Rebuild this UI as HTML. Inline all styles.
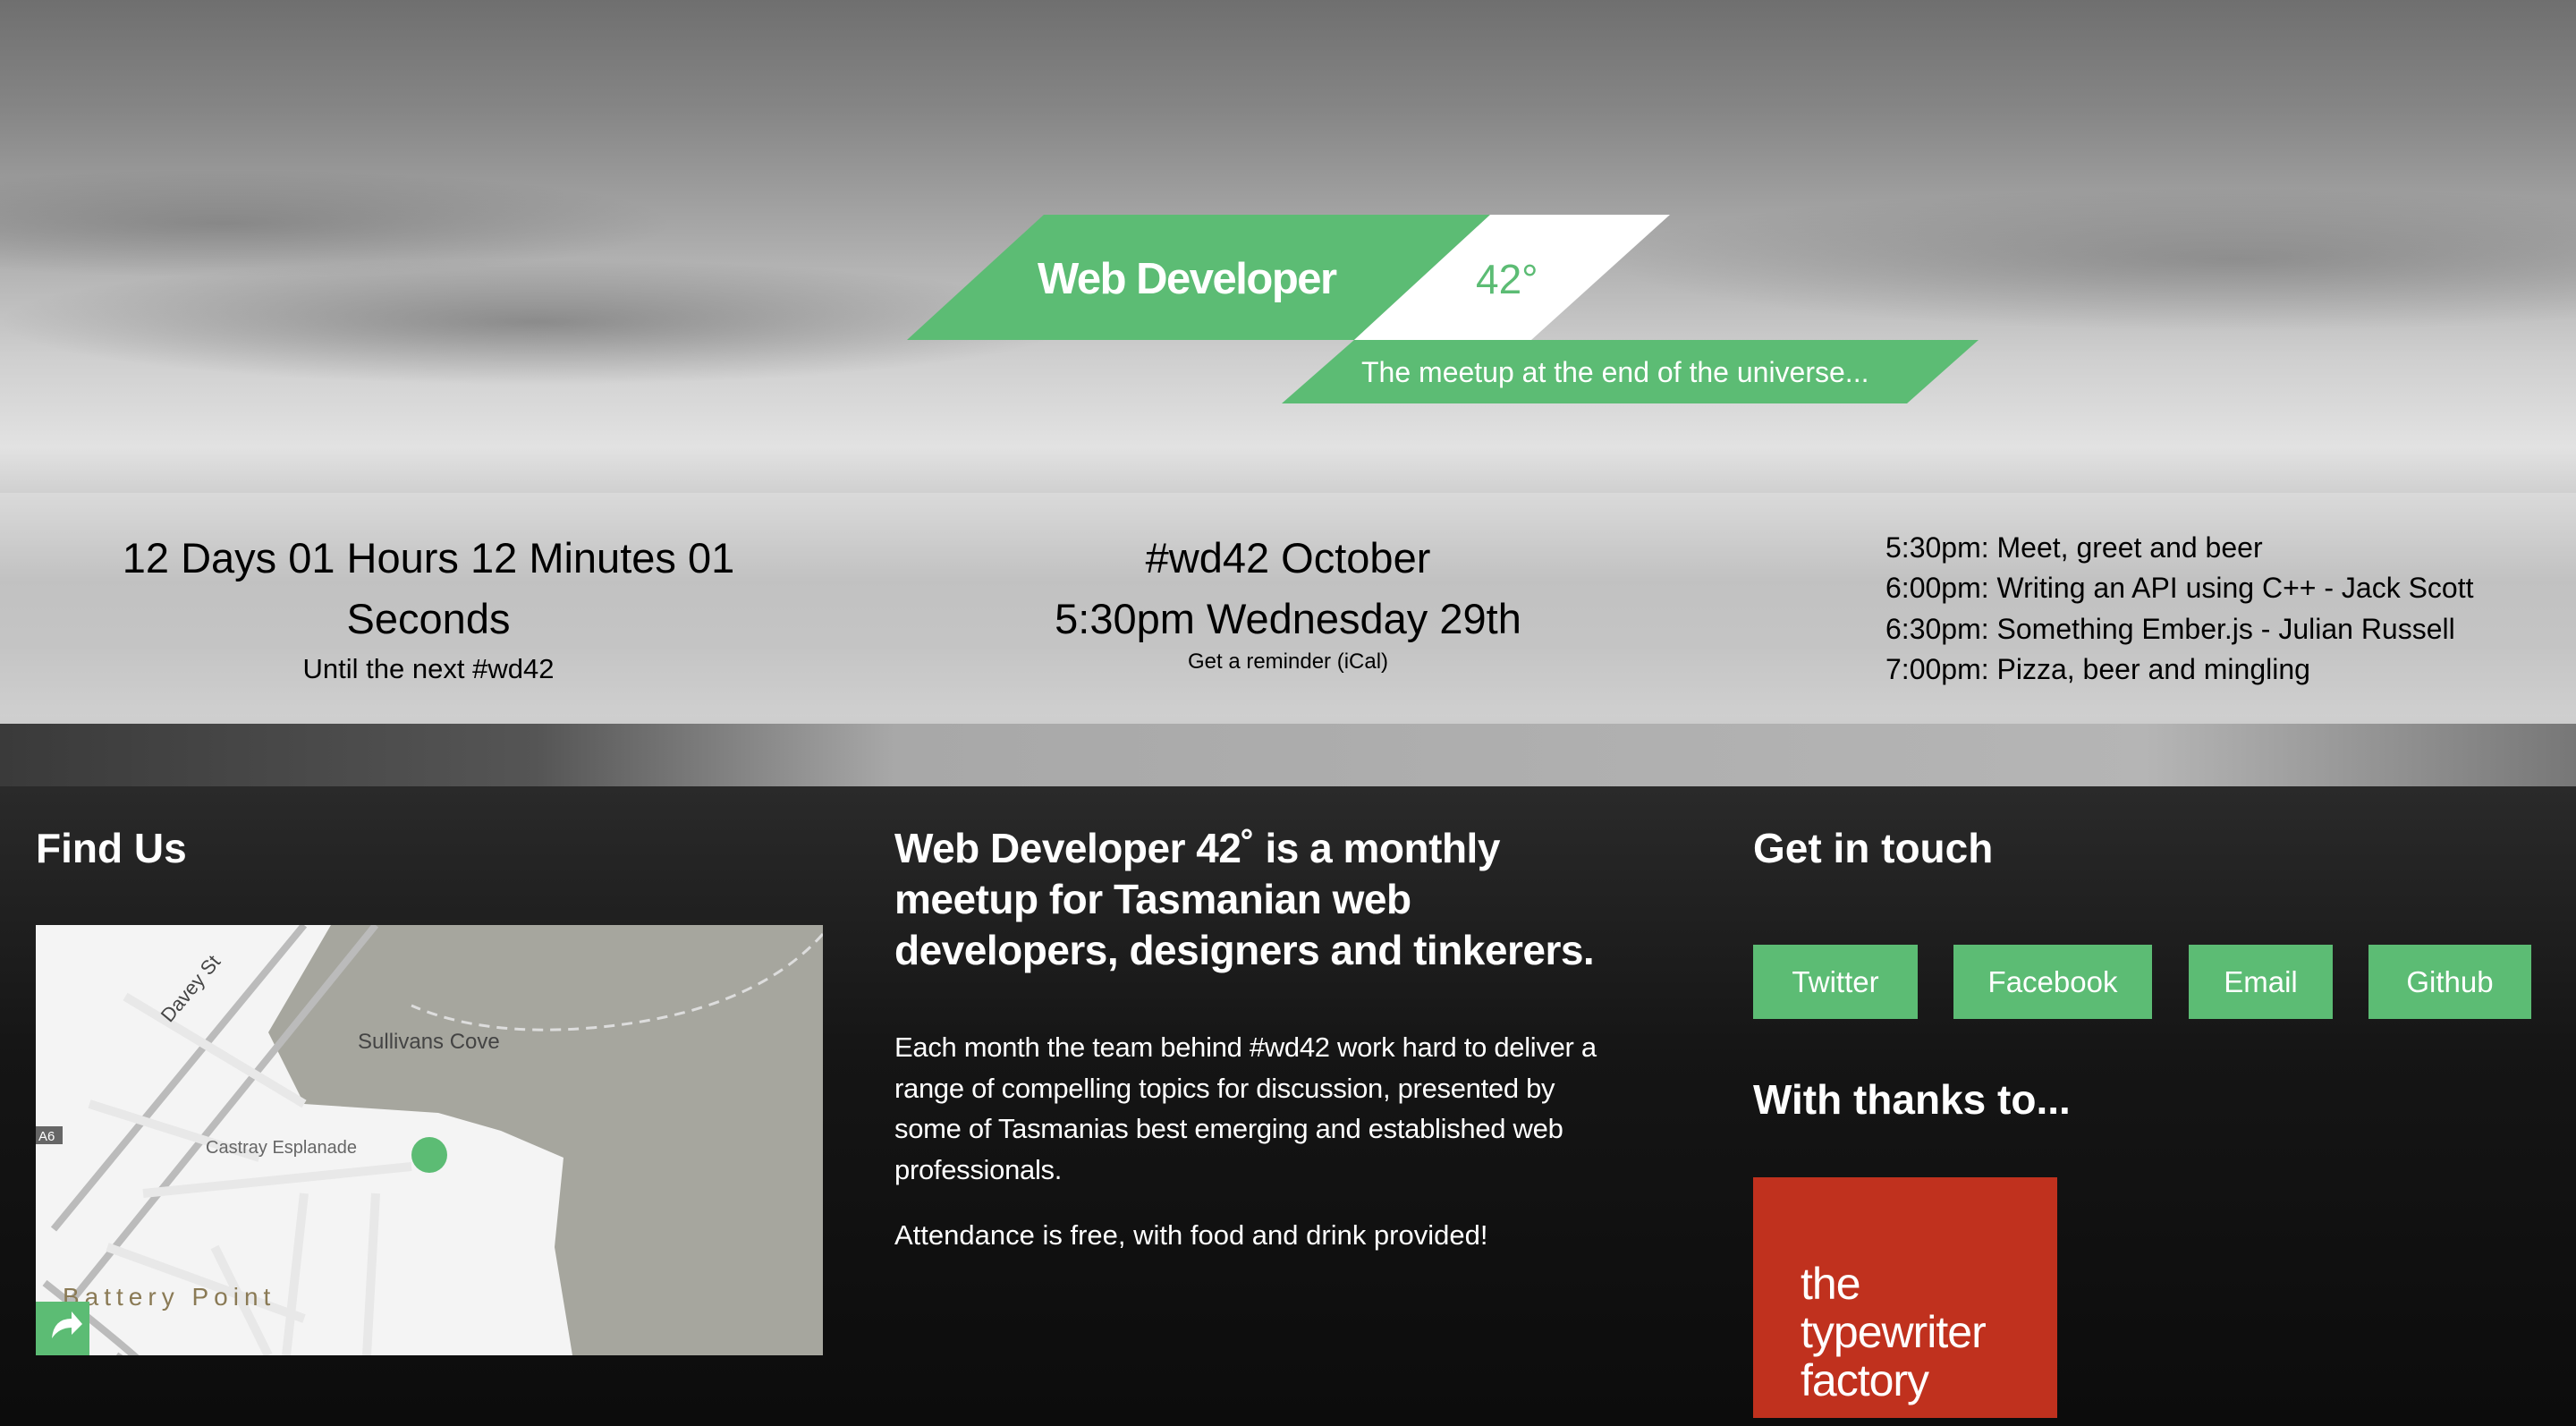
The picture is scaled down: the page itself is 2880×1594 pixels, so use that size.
<!DOCTYPE html>
<html><head><meta charset="utf-8"><style>
*{margin:0;padding:0;box-sizing:border-box}
body{width:2880px;height:1594px;overflow:hidden;position:relative;font-family:"Liberation Sans",sans-serif;background:#111}
.abs{position:absolute}
#sky{left:0;top:0;width:2880px;height:879px;background:
radial-gradient(ellipse 600px 70px at 600px 360px,rgba(70,70,70,.45),transparent),
radial-gradient(ellipse 700px 80px at 2500px 290px,rgba(90,90,90,.4),transparent),
radial-gradient(ellipse 500px 60px at 250px 250px,rgba(80,80,80,.35),transparent),
linear-gradient(#6f6f6f 0px,#858585 120px,#a8a8a8 260px,#cfcfcf 400px,#e2e2e2 500px,#d0d0d0 551px,#9a9a9a 650px,#a0a0a0 720px,#b8b8b8 800px,#8a8a8a 879px)}
#band{left:0;top:551px;width:2880px;height:258px;background:rgba(225,225,225,.55)}
#land{left:0;top:809px;width:2880px;height:70px;background:linear-gradient(90deg,#3a3a3a 0,#555 600px,#a8a8a8 1000px,#b5b5b5 2400px,#777 2880px)}
#dark{left:0;top:879px;width:2880px;height:715px;background:linear-gradient(#2a2a2a,#151515 300px,#0c0c0c)}
.c{text-align:center;color:#000}
h2{position:absolute;color:#fff;font-weight:bold;font-size:46px;line-height:57px;white-space:nowrap}
.btn{position:absolute;top:1056px;height:83px;background:#5cbc74;color:#fff;font-size:33px;line-height:83px;text-align:center}
p.t{position:absolute;color:#fff;font-size:31px;line-height:45.5px;white-space:nowrap}
</style></head><body>
<div class="abs" id="sky"></div>
<div class="abs" id="land"></div>
<div class="abs" id="band"></div>
<div class="abs" id="dark"></div>

<svg class="abs" style="left:0;top:0" width="2880" height="880">
<polygon points="1167,240 1666,240 1514,380 1014,380" fill="#5cbc74"/>
<polygon points="1666,240 1867,240 1712,380 1514,380" fill="#fff"/>
<polygon points="1514,380 2212,380 2132,451 1433,451" fill="#5cbc74"/>
</svg>
<div class="abs" style="left:1160px;top:282px;color:#fff;font-weight:bold;font-size:49px;letter-spacing:-1.5px;line-height:60px">Web Developer</div>
<div class="abs" style="left:1650px;top:282px;color:#5cbc74;font-size:46px;line-height:60px">42°</div>
<div class="abs" style="left:1522px;top:396px;color:#fff;font-size:32px;line-height:40px;letter-spacing:0px">The meetup at the end of the universe...</div>

<div class="abs c" style="left:79px;top:590px;width:800px;font-size:47px;line-height:68px">12 Days 01 Hours 12 Minutes 01<br>Seconds</div>
<div class="abs c" style="left:79px;top:728px;width:800px;font-size:31px;line-height:40px">Until the next #wd42</div>
<div class="abs c" style="left:1040px;top:590px;width:800px;font-size:47px;line-height:68px">#wd42 October<br>5:30pm Wednesday 29th</div>
<div class="abs c" style="left:1040px;top:724px;width:800px;font-size:24px;line-height:32px">Get a reminder (iCal)</div>
<div class="abs" style="left:2108px;top:590px;font-size:32px;line-height:45.3px;color:#000">5:30pm: Meet, greet and beer<br>6:00pm: Writing an API using C++ - Jack Scott<br>6:30pm: Something Ember.js - Julian Russell<br>7:00pm: Pizza, beer and mingling</div>

<h2 style="left:40px;top:920px">Find Us</h2>
<svg class="abs" style="left:40px;top:1034px" width="880" height="481">
<rect width="880" height="481" fill="#f4f4f4"/>
<path d="M520 0 L880 0 L880 481 L600 481 L580 360 L590 260 L520 230 L450 210 L300 200 L260 120 L330 0Z" fill="#a6a69e"/>
<path d="M300 0 L20 340 M380 0 L40 420 M10 400 Q200 550 90 481" stroke="#bbb" stroke-width="8" fill="none"/>
<path d="M100 80 L300 200 M60 200 L250 260 M120 300 L420 270 M200 360 L260 481 M300 300 L280 481 M380 300 L370 481 M80 360 L300 440" stroke="#e8e8e8" stroke-width="10" fill="none"/>
<path d="M880 10 Q800 100 620 115 Q500 125 420 90" stroke="#ddd" stroke-width="3" stroke-dasharray="12 8" fill="none"/>
<text x="360" y="138" font-size="24" fill="#444" font-family="Liberation Sans">Sullivans Cove</text>
<text x="190" y="255" font-size="20" fill="#666" font-family="Liberation Sans">Castray Esplanade</text>
<text x="150" y="110" font-size="22" fill="#444" font-family="Liberation Sans" transform="rotate(-50 150 110)">Davey St</text>
<text x="30" y="425" font-size="28" fill="#8a7a55" letter-spacing="6" font-family="Liberation Sans">Battery Point</text>
<rect x="0" y="225" width="30" height="20" fill="#666"/>
<text x="3" y="241" font-size="15" fill="#fff" font-family="Liberation Sans">A6</text>
<circle cx="440" cy="257" r="20" fill="#5cbc74"/>
<rect x="0" y="421" width="60" height="60" fill="#5cbc74"/>
<path d="M18 462 Q20 440 40 440 L40 432 L52 446 L40 458 L40 450 Q26 450 18 462Z" fill="#fff"/>
</svg>

<h2 style="left:1000px;top:920px;letter-spacing:-0.5px">Web Developer 42˚ is a monthly<br>meetup for Tasmanian web<br>developers, designers and tinkerers.</h2>
<p class="t" style="left:1000px;top:1148px;letter-spacing:-0.3px">Each month the team behind #wd42 work hard to deliver a<br>range of compelling topics for discussion, presented by<br>some of Tasmanias best emerging and established web<br>professionals.</p>
<p class="t" style="left:1000px;top:1358px">Attendance is free, with food and drink provided!</p>

<h2 style="left:1960px;top:920px">Get in touch</h2>
<div class="btn" style="left:1960px;width:184px">Twitter</div>
<div class="btn" style="left:2184px;width:222px">Facebook</div>
<div class="btn" style="left:2447px;width:161px">Email</div>
<div class="btn" style="left:2648px;width:182px">Github</div>
<h2 style="left:1960px;top:1201px">With thanks to...</h2>
<div class="abs" style="left:1960px;top:1316px;width:340px;height:269px;background:#c0311e"></div>
<div class="abs" style="left:2013px;top:1408px;color:#fff;font-size:50px;line-height:54px;letter-spacing:-1px">the<br>typewriter<br>factory</div>
</body></html>
